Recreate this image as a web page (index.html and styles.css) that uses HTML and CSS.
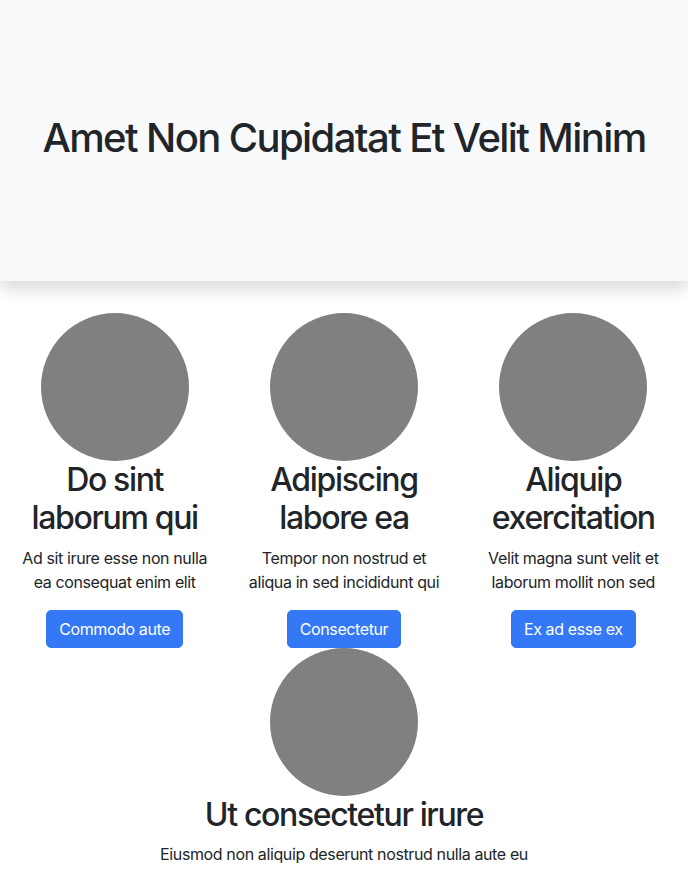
FILE: index.html
```html
<!DOCTYPE html>
<html lang="en">
<head>
<meta charset="utf-8">
<title>Amet Non Cupidatat Et Velit Minim</title>
<link rel="stylesheet" href="styles.css">
</head>
<body>
<header class="hero">
  <h1 class="hero-title">Amet Non Cupidatat Et Velit Minim</h1>
</header>
<main class="features">
  <section class="feature">
    <div class="avatar"></div>
    <h2 class="feature-title">Do sint laborum qui</h2>
    <p class="feature-text">Ad sit irure esse non nulla ea consequat enim elit</p>
    <a class="btn" href="#">Commodo aute</a>
  </section>
  <section class="feature">
    <div class="avatar"></div>
    <h2 class="feature-title">Adipiscing labore ea</h2>
    <p class="feature-text">Tempor non nostrud et aliqua in sed incididunt qui</p>
    <a class="btn" href="#">Consectetur</a>
  </section>
  <section class="feature">
    <div class="avatar"></div>
    <h2 class="feature-title">Aliquip exercitation</h2>
    <p class="feature-text">Velit magna sunt velit et laborum mollit non sed</p>
    <a class="btn" href="#">Ex ad esse ex</a>
  </section>
  <section class="feature feature-wide">
    <div class="avatar"></div>
    <h2 class="feature-title">Ut consectetur irure</h2>
    <p class="feature-text">Eiusmod non aliquip deserunt nostrud nulla aute eu</p>
    <a class="btn" href="#">Lorem ipsum</a>
  </section>
</main>
</body>
</html>
```

FILE: styles.css
```css
* { box-sizing: border-box; }
html, body { margin: 0; padding: 0; }
body {
  font-family: Inter, "Liberation Sans", sans-serif;
  font-size: 16px;
  line-height: 1.5;
  color: #212529;
  background: #fff;
}
.hero {
  height: 281px;
  background: #f8f9fa;
  box-shadow: 0 8px 16px rgba(0, 0, 0, 0.15);
  display: flex;
  align-items: center;
  justify-content: center;
  position: relative;
}
.hero-title {
  margin: 0 0 6px;
  font-size: 40px;
  font-weight: 500;
  line-height: 1.2;
  letter-spacing: -1.6px;
  text-align: center;
}
.features {
  display: flex;
  flex-wrap: wrap;
  padding-top: 32px;
}
.feature {
  flex: 0 0 33.3333%;
  padding: 0 12px;
  display: flex;
  flex-direction: column;
  align-items: center;
  text-align: center;
}
.feature-wide { flex: 0 0 100%; }
.avatar {
  width: 148px;
  height: 148px;
  border-radius: 50%;
  background: #808080;
  flex: none;
}
.feature-title {
  margin: 0 0 8px;
  font-size: 32px;
  font-weight: 500;
  line-height: 1.2;
  letter-spacing: -1.35px;
}
.feature-text {
  margin: 0 0 16px;
  font-size: 16px;
  line-height: 24px;
  letter-spacing: -0.38px;
}
.btn {
  display: inline-block;
  padding: 6px 12px;
  border: 1px solid #3478f6;
  border-radius: 5px;
  background: #3478f6;
  color: #fff;
  text-decoration: none;
  font-size: 16px;
  line-height: 24px;
  letter-spacing: -0.4px;
}
```
